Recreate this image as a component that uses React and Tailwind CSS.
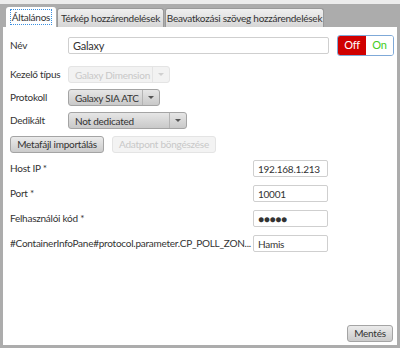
export default function App() {
  const font = "font-['Lato','Noto_Sans',sans-serif]";

  const Combo = ({ text, width, disabled }) => (
    <div
      className={`flex h-[17px] shrink-0 items-stretch rounded-[3px] border ${
        disabled
          ? "border-[#e4e4e4] bg-[#f2f2f2] text-[#c8c8c8]"
          : "border-[#a4a4a4] bg-gradient-to-b from-[#e6e6e6] to-[#c9c9c9] text-[#333]"
      } ${width}`}
    >
      <div className="flex flex-1 items-center overflow-hidden pl-[6px] leading-none whitespace-nowrap">{text}</div>
      <div
        className={`flex w-[17px] shrink-0 items-center justify-center border-l ${
          disabled ? "border-[#e4e4e4]" : "border-[#b4b4b4]"
        }`}
      >
        <div
          className={`h-0 w-0 border-x-[3px] border-t-[3px] border-x-transparent ${
            disabled ? "border-t-[#d0d0d0]" : "border-t-[#555]"
          }`}
        />
      </div>
    </div>
  );

  const Input = ({ value, width }) => (
    <div
      className={`flex h-[17px] shrink-0 items-center rounded-[2px] border border-[#cfcfcf] bg-white pl-[4px] leading-none whitespace-nowrap text-[#333] ${width}`}
    >
      {value}
    </div>
  );

  const fields = [
    ["Host IP *", "192.168.1.213"],
    ["Port *", "10001"],
    ["Felhasználói kód *", "●●●●●"],
    ["#ContainerInfoPane#protocol.parameter.CP_POLL_ZON...", "Hamis"],
  ];

  return (
    <div className={`flex h-[348px] w-[400px] flex-col bg-[#ececec] pt-[4px] text-[10px] tracking-[-0.25px] ${font}`}>
      {/* Fülek */}
      <div className="flex h-[23px] items-end gap-[1px] bg-[#acacac] pl-[6px] pr-[3px] whitespace-nowrap">
        <div className="flex h-[20px] w-[50px] items-center justify-center rounded-t-[3px] bg-white text-[#333]">
          <span className="border border-dotted border-[#3a8fe0] px-[1px] leading-[14px]">Általános</span>
        </div>
        <div className="flex h-[19px] w-[107px] items-center justify-center rounded-t-[3px] border border-b-0 border-[#9a9a9a] bg-gradient-to-b from-[#f0f0f0] to-[#d6d6d6] text-[#333]">
          Térkép hozzárendelések
        </div>
        <div className="flex h-[19px] w-[159px] items-center justify-center rounded-t-[3px] border border-b-0 border-[#9a9a9a] bg-gradient-to-b from-[#f0f0f0] to-[#d6d6d6] text-[#333]">
          Beavatkozási szöveg hozzárendelések
        </div>
      </div>

      {/* Tartalom */}
      <div className="flex flex-1 flex-col border-x-[3px] border-b-[3px] border-[#acacac] bg-white pl-[7px] pr-[4px] whitespace-nowrap text-[#333]">
        <div className="mt-[8px] flex h-[21px] items-center">
          <div className="w-[58px] shrink-0">Név</div>
          <Input value={<span className="text-[11px]">Galaxy</span>} width="w-[261px]" />
          <div className="ml-[8px] flex h-[21px] w-[57px] shrink-0 overflow-hidden rounded-[3px] border border-[#7fa9d8] text-[11px]">
            <div className="flex w-[28px] items-center justify-center bg-[#d00000] text-white">Off</div>
            <div className="flex flex-1 items-center justify-center bg-white text-[#44cc22]">On</div>
          </div>
        </div>

        <div className="mt-[10px] flex items-center">
          <div className="w-[58px] shrink-0">Kezelő típus</div>
          <Combo text="Galaxy Dimension" width="w-[102px]" disabled />
        </div>
        <div className="mt-[6px] flex items-center">
          <div className="w-[58px] shrink-0">Protokoll</div>
          <Combo text="Galaxy SIA ATC" width="w-[92px]" />
        </div>
        <div className="mt-[6px] flex items-center">
          <div className="w-[58px] shrink-0">Dedikált</div>
          <Combo text="Not dedicated" width="w-[119px]" />
        </div>

        <div className="mt-[7px] flex gap-[8px]">
          <div className="flex h-[17px] w-[94px] items-center justify-center rounded-[3px] border border-[#a4a4a4] bg-gradient-to-b from-[#ebebeb] to-[#cbcbcb]">
            Metafájl importálás
          </div>
          <div className="flex h-[17px] w-[104px] items-center justify-center rounded-[3px] border border-[#e4e4e4] bg-[#f3f3f3] text-[#c8c8c8]">
            Adatpont böngészése
          </div>
        </div>

        <div className="mt-[7px] flex flex-col gap-[8px]">
          {fields.map(([label, value]) => (
            <div key={label} className="flex items-center">
              <div className="w-[243px] shrink-0 overflow-hidden">{label}</div>
              <Input value={value} width="w-[75px]" />
            </div>
          ))}
        </div>

        <div className="mt-auto mb-[3px] flex justify-end">
          <div className="flex h-[17px] w-[46px] items-center justify-center rounded-[3px] border border-[#a4a4a4] bg-gradient-to-b from-[#ebebeb] to-[#cbcbcb]">
            Mentés
          </div>
        </div>
      </div>
    </div>
  );
}
